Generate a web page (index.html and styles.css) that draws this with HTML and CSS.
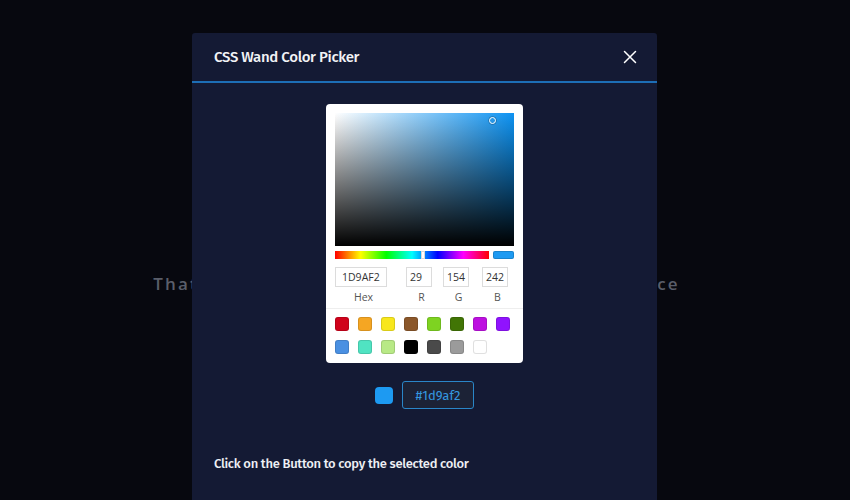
FILE: index.html
```html
<!DOCTYPE html>
<html>
<head>
<meta charset="utf-8">
<link rel="stylesheet" href="styles.css">
</head>
<body>
<main class="page">
  <p class="bg-text">That's all for the CSS Wand color picker experience</p>
</main>
<div class="modal">
  <header class="modal-head">
    <h1 class="modal-title">CSS Wand Color Picker</h1>
    <svg class="close" width="14" height="14" viewBox="0 0 14 14"><path d="M1.5 1.5 L12.5 12.5 M12.5 1.5 L1.5 12.5" stroke="#fff" stroke-width="1.5" stroke-linecap="round"/></svg>
  </header>
  <section class="modal-body">
    <div class="picker">
      <div class="sv">
        <span class="sv-handle"></span>
      </div>
      <div class="hue-row">
        <div class="hue"><span class="hue-handle"></span></div>
        <div class="preview"></div>
      </div>
      <div class="fields">
        <div class="field f-hex"><div class="inp">1D9AF2</div><span class="lbl">Hex</span></div>
        <div class="field f-r"><div class="inp">29</div><span class="lbl">R</span></div>
        <div class="field f-g"><div class="inp">154</div><span class="lbl">G</span></div>
        <div class="field f-b"><div class="inp">242</div><span class="lbl">B</span></div>
      </div>
      <div class="presets">
        <span class="sw" style="background:#d0021b"></span>
        <span class="sw" style="background:#f5a623"></span>
        <span class="sw" style="background:#f8e71c"></span>
        <span class="sw" style="background:#8b572a"></span>
        <span class="sw" style="background:#7ed321"></span>
        <span class="sw" style="background:#417505"></span>
        <span class="sw" style="background:#bd10e0"></span>
        <span class="sw" style="background:#9013fe"></span>
        <span class="sw" style="background:#4a90e2"></span>
        <span class="sw" style="background:#50e3c2"></span>
        <span class="sw" style="background:#b8e986"></span>
        <span class="sw" style="background:#000000"></span>
        <span class="sw" style="background:#4a4a4a"></span>
        <span class="sw" style="background:#9b9b9b"></span>
        <span class="sw" style="background:#ffffff"></span>
      </div>
    </div>
    <div class="result">
      <span class="result-swatch"></span>
      <button class="copy-btn">#1d9af2</button>
    </div>
    <p class="hint">Click on the Button to copy the selected color</p>
  </section>
</div>
</body>
</html>
```

FILE: styles.css
```css
* { box-sizing: border-box; }
html, body {
  margin: 0;
  height: 500px;
  background: #07080f;
  font-family: "Fira Sans", Roboto, "Noto Sans", sans-serif;
  overflow: hidden;
}
.page {
  height: 500px;
  display: flex;
  align-items: center;
  justify-content: center;
  padding-top: 66px;
  padding-right: 17px;
}
.bg-text {
  margin: 0;
  color: #5a5e6a;
  font-family: "Open Sans", sans-serif;
  font-size: 17px;
  font-weight: 600;
  letter-spacing: 2.2px;
  white-space: nowrap;
}
.modal {
  position: absolute;
  top: 33px;
  left: 192px;
  width: 465px;
  height: 480px;
  background: #141a34;
  border-radius: 3px 3px 0 0;
}
.modal-head {
  height: 50px;
  padding: 0 20px 0 22px;
  display: flex;
  align-items: center;
  justify-content: space-between;
  border-bottom: 2px solid #1d6eb6;
}
.modal-title {
  margin: 0;
  color: #f2f3f6;
  font-size: 15px;
  font-weight: 500;
  letter-spacing: -0.35px;
}
.close { display: block; }
.modal-body {
  padding-top: 21px;
  display: flex;
  flex-direction: column;
  align-items: center;
}
.picker {
  width: 197px;
  background: #fff;
  border-radius: 4px;
  padding: 9px;
  display: flex;
  flex-direction: column;
}
.sv {
  position: relative;
  height: 133px;
  background:
    linear-gradient(to top, #000, rgba(0,0,0,0)),
    linear-gradient(to right, #fff, hsl(205, 90%, 50%));
}
.sv-handle {
  position: absolute;
  left: 154px;
  top: 4px;
  width: 7px;
  height: 7px;
  border-radius: 50%;
  border: 1.5px solid #fff;
  box-shadow: 0 0 0 0.5px rgba(0,0,0,0.4);
}
.hue-row {
  margin-top: 5px;
  display: flex;
  gap: 4px;
  height: 8px;
}
.hue {
  position: relative;
  flex: 0 0 154px;
  background: linear-gradient(to right, #f00, #ff0, #0f0, #0ff, #00f, #f0f, #f00);
}
.hue-handle {
  position: absolute;
  left: 86px;
  top: 0;
  width: 4px;
  height: 8px;
  background: #fff;
  border: 1px solid #d8d8d8;
}
.preview {
  flex: 1;
  background: #1d9af2;
  border-radius: 2px;
  box-shadow: inset 0 0 0 1px rgba(0,0,0,0.15);
}
.fields {
  margin-top: 8px;
  display: flex;
  padding-bottom: 4px;
  border-bottom: 1px solid #eeeeee;
  margin-left: -9px;
  margin-right: -9px;
  padding-left: 9px;
}
.field {
  display: flex;
  flex-direction: column;
  align-items: center;
}
.inp {
  height: 20px;
  border: 1px solid #dcdcdc;
  font-family: "Open Sans", sans-serif;
  font-size: 10.5px;
  color: #333;
  line-height: 18px;
  padding-left: 6px;
  align-self: stretch;
}
.lbl {
  margin-top: 3px;
  font-family: "Open Sans", sans-serif;
  font-size: 10.5px;
  color: #555;
  line-height: 14px;
  padding-left: 5px;
}
.f-hex { width: 52px; }
.f-r { width: 26px; margin-left: 19px; }
.f-g { width: 26px; margin-left: 11px; }
.f-b { width: 26px; margin-left: 13px; }
.f-r .inp, .f-g .inp, .f-b .inp { padding-left: 3px; }
.presets {
  margin-top: 8px;
  display: grid;
  grid-template-columns: repeat(8, 14px);
  column-gap: 9px;
  row-gap: 9px;
}
.sw {
  display: block;
  width: 14px;
  height: 14px;
  border-radius: 3px;
  box-shadow: inset 0 0 0 1px rgba(0,0,0,0.12);
}
.result {
  margin-top: 18px;
  display: flex;
  align-items: center;
  gap: 9px;
}
.result-swatch {
  width: 18px;
  height: 17px;
  border-radius: 4px;
  background: #1d9af2;
}
.copy-btn {
  width: 72px;
  height: 28px;
  background: #1c2236;
  border: 1px solid #2a86c8;
  border-radius: 3px;
  color: #3598e0;
  font-family: "Fira Sans", Roboto, "Noto Sans", sans-serif;
  font-size: 13px;
  padding: 0;
}
.hint {
  align-self: flex-start;
  margin: 47px 0 0 22px;
  color: #eef0f4;
  font-size: 13px;
  font-weight: 500;
  letter-spacing: -0.3px;
}
```
